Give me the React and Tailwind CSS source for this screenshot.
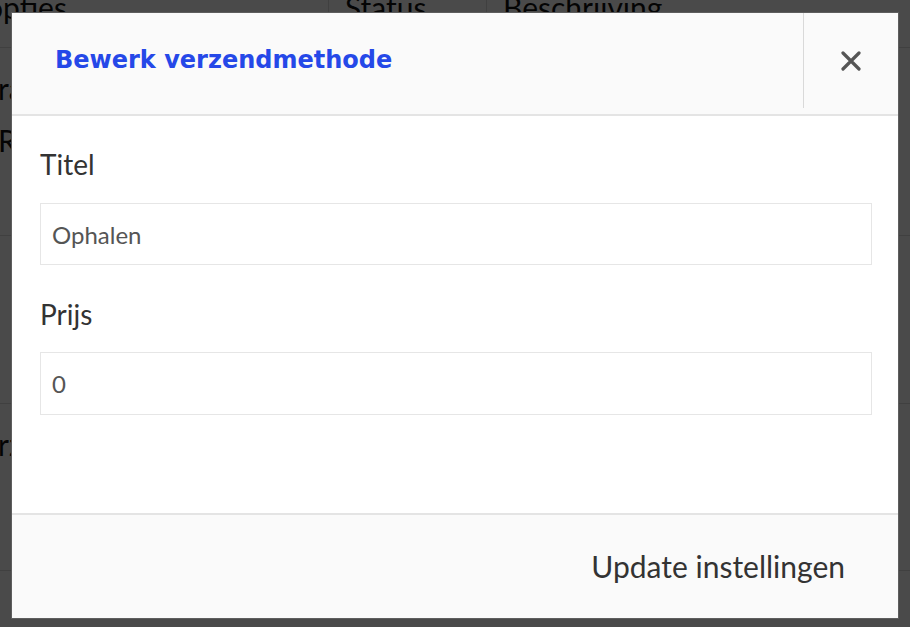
import { useState } from 'react';

const rows = [
    { h: 'h-[188px]', lines: ['ra', 'R'] },
    { h: 'h-[168px]', lines: [] },
    { h: 'h-[167px]', lines: ['rz'] },
];

export default function App() {
    const [titel, setTitel] = useState('Ophalen');
    const [prijs, setPrijs] = useState('0');

    return (
        <div className="relative w-[910px] h-[627px] overflow-hidden bg-white font-['Lato',sans-serif]">
            {/* tabel achter de modal */}
            <div className="flex h-[48px] border-b border-[#dddddd] text-[30px] leading-none text-[#111]">
                <div className="w-[343px] border-r border-[#dddddd] -mt-[8px] -ml-[14px] pl-0">opties</div>
                <div className="w-[158px] border-r border-[#dddddd] -mt-[8px] pl-[16px]">Status</div>
                <div className="flex-1 -mt-[8px] pl-[16px]">Beschrijving</div>
            </div>
            {rows.map((r, i) => (
                <div key={i} className={`${r.h} border-b border-[#dddddd] text-[30px] text-[#111] leading-[52px] pt-[14px] -ml-[2px]`}>
                    {r.lines.map(l => <div key={l}>{l}</div>)}
                </div>
            ))}

            <div className="absolute inset-0 bg-black/[0.71]" />

            {/* modal */}
            <div className="absolute left-[12px] top-[13px] w-[886px] h-[605px] flex flex-col bg-white ring-1 ring-[#5e5e5e]">
                <div className="h-[103px] shrink-0 flex bg-[#fafafa] border-b-2 border-[#e4e4e4]">
                    <h2 className="flex-1 flex items-center pl-[43px] pb-[7px] font-['DejaVu_Sans',sans-serif] font-bold text-[24px] text-[#2548e8]">
                        Bewerk verzendmethode
                    </h2>
                    <button className="self-start h-[95px] w-[95px] border-l border-[#d9d9d9] flex items-center justify-center">
                        <svg width="20" height="20" viewBox="0 0 20 20">
                            <path d="M2 2 L18 18 M18 2 L2 18" stroke="#555" strokeWidth="3.2" strokeLinecap="round" />
                        </svg>
                    </button>
                </div>

                <div className="flex-1 bg-white pl-[28px] pr-[26px] pt-[34px]">
                    <label className="block text-[28px] leading-none text-[#333]">Titel</label>
                    <input
                        className="mt-[25px] block w-full h-[62px] border border-[#e6e6e6] px-[11px] text-[24px] text-[#555] outline-none"
                        value={titel}
                        onChange={e => setTitel(e.target.value)}
                    />
                    <label className="block mt-[35px] text-[28px] leading-none text-[#333]">Prijs</label>
                    <input
                        className="mt-[24px] block w-full h-[63px] border border-[#e6e6e6] px-[11px] text-[24px] text-[#555] outline-none"
                        value={prijs}
                        onChange={e => setPrijs(e.target.value)}
                    />
                </div>

                <div className="h-[105px] shrink-0 flex items-center justify-end pr-[53px] bg-[#fafafa] border-t-2 border-[#e4e4e4]">
                    <button className="text-[30px] text-[#333]">Update instellingen</button>
                </div>
            </div>
        </div>
    );
}
